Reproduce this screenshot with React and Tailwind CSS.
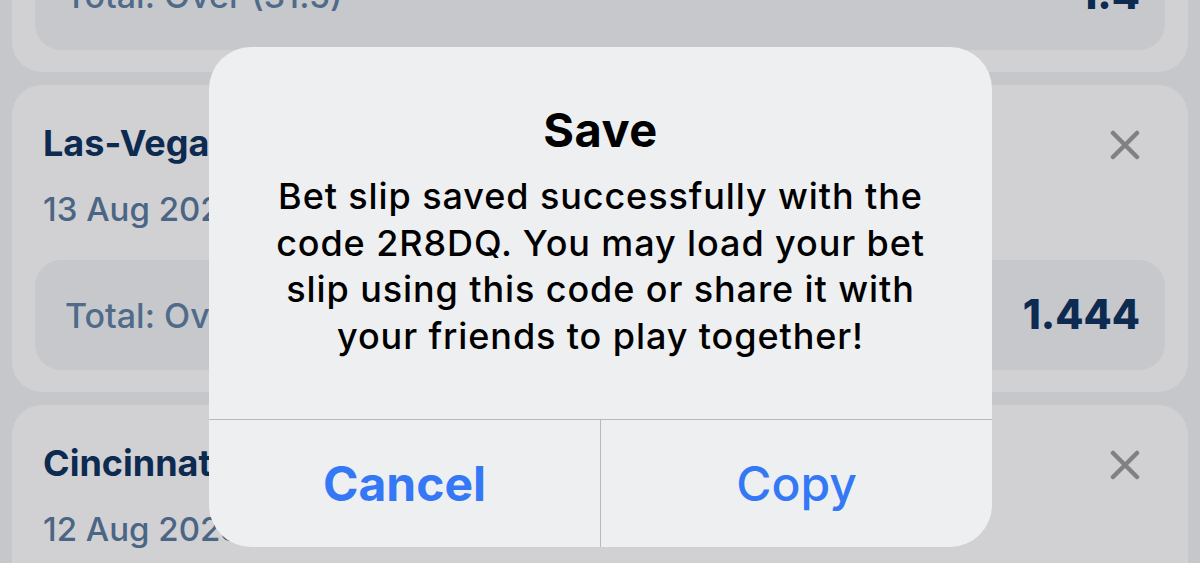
const font = { fontFamily: "Inter, 'Noto Sans', sans-serif" };

function CloseIcon() {
  return (
    <svg width="30" height="30" viewBox="0 0 30 30" className="shrink-0">
      <path d="M3 3 L27 27 M27 3 L3 27" stroke="#818185" strokeWidth="4.5" strokeLinecap="round" />
    </svg>
  );
}

function BetCard({ title, date, market, odds, showClose = true }) {
  return (
    <div className="rounded-[30px] bg-[#d1d1d3] px-[23px] pt-[38px] pb-[22px]">
      <div className="flex h-[40px] items-center justify-between pl-2 pr-[25px]">
        <div className="whitespace-nowrap text-[36px] leading-[40px] font-bold text-[#0d2a51]">{title}</div>
        {showClose && <div className="mt-1"><CloseIcon /></div>}
      </div>
      <div className="mt-[26px] h-[40px] whitespace-nowrap pl-2 text-[33px] leading-[40px] font-medium text-[#4b6585]">
        {date}
      </div>
      <div className="mt-[31px] flex h-[110px] items-center justify-between rounded-[26px] bg-[#c7c8cc] pl-[30px] pr-[25px]">
        <span className="text-[34px] font-medium text-[#506b8a]">{market}</span>
        <span className="text-[41px] font-extrabold text-[#0d2a51]">{odds}</span>
      </div>
    </div>
  );
}

export default function App() {
  return (
    <div className="relative h-[563px] w-[1200px] overflow-hidden bg-[#c6c7cb]" style={font}>
      <div className="-mt-[235px] flex flex-col gap-[13px] px-3">
        <BetCard title="Denver Broncos" date="13 Aug 2023 (Sun) 03:00" market="Total: Over (31.5)" odds="1.4" />
        <BetCard title="Las-Vegas Raiders" date="13 Aug 2023 (Sun) 05:00" market="Total: Over (33.5)" odds="1.444" />
        <BetCard title="Cincinnati Bengals" date="12 Aug 2023   (Sat) 23:00 Pre-season" market="Total: Over (35.5)" odds="1.5" />
      </div>

      <div className="absolute left-[209px] top-[47px] flex h-[500px] w-[783px] flex-col overflow-hidden rounded-[42px] bg-[#eeeff1]">
        <div className="flex flex-1 flex-col items-center pt-[56px] text-black">
          <div className="text-[47px] leading-[54px] font-bold tracking-[0.5px]">Save</div>
          <div className="mt-4 text-center text-[36px] leading-[46.5px] font-medium tracking-[0.9px]">
            <div className="whitespace-nowrap">Bet slip saved successfully with the</div>
            <div className="whitespace-nowrap">code 2R8DQ. You may load your bet</div>
            <div className="whitespace-nowrap">slip using this code or share it with</div>
            <div className="whitespace-nowrap">your friends to play together!</div>
          </div>
        </div>
        <div className="flex h-[128px] border-t border-[#b9b9bd]">
          <button className="flex flex-1 items-center justify-center border-r border-[#b9b9bd] text-[48px] font-bold text-[#3478f6]">
            Cancel
          </button>
          <button className="flex flex-1 items-center justify-center text-[48px] font-medium text-[#3478f6]">
            Copy
          </button>
        </div>
      </div>
    </div>
  );
}
